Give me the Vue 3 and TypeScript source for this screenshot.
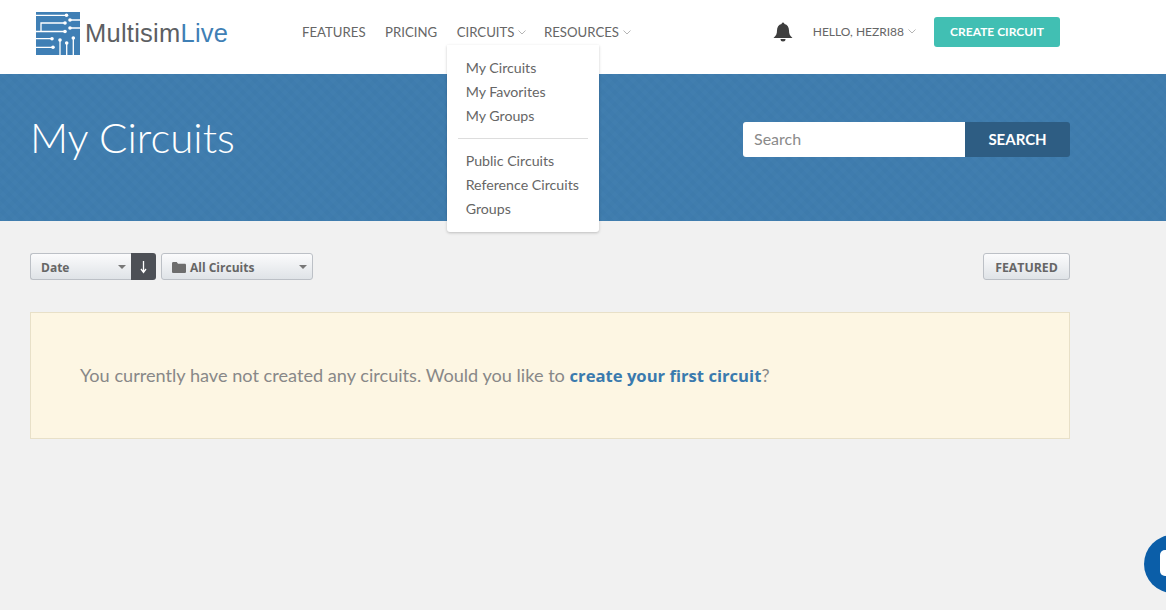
<script setup lang="ts">
const menuTop = ['My Circuits', 'My Favorites', 'My Groups']
const menuBottom = ['Public Circuits', 'Reference Circuits', 'Groups']
</script>

<template>
  <div class="page">
    <header class="topbar">
      <a class="logo">
        <svg class="logo__mark" width="44" height="43" viewBox="0 0 44 43">
          <rect width="44" height="43" fill="#3f7fb5" />
          <g fill="none" stroke="#fff" stroke-width="1.3">
            <path d="M0 3.300H30M34 8H44M34 16H44M29 11H5V19.500H0M5 19.500H29M0 26.700H16M0 35.300H17" />
            <path d="M24 28V43M30.700 31V43M37.300 26V43" />
          </g>
          <g fill="#fff">
            <circle cx="30.500" cy="3.300" r="1.800" />
            <circle cx="34" cy="8" r="1.800" />
            <circle cx="34" cy="16" r="1.800" />
            <circle cx="29" cy="11" r="1.800" />
            <circle cx="29" cy="19.500" r="1.800" />
            <circle cx="16" cy="26.700" r="1.800" />
            <circle cx="17" cy="35.300" r="1.800" />
            <circle cx="24" cy="28" r="1.800" />
            <circle cx="30.700" cy="31" r="1.800" />
            <circle cx="37.300" cy="26" r="1.800" />
          </g>
        </svg>
        <span class="logo__text">Multisim<span class="logo__live">Live</span></span>
      </a>

      <nav class="nav">
        <a class="nav__link">FEATURES</a>
        <a class="nav__link">PRICING</a>
        <a class="nav__link nav__link--caret">
          CIRCUITS
          <svg class="caret" width="8" height="5" viewBox="0 0 8 5"><path d="M.5.5 4 4 7.500.5" /></svg>
          <div class="menu">
            <a v-for="item in menuTop" :key="item" class="menu__item">{{ item }}</a>
            <hr class="menu__rule" />
            <a v-for="item in menuBottom" :key="item" class="menu__item">{{ item }}</a>
          </div>
        </a>
        <a class="nav__link nav__link--caret">
          RESOURCES
          <svg class="caret" width="8" height="5" viewBox="0 0 8 5"><path d="M.5.5 4 4 7.500.5" /></svg>
        </a>
      </nav>

      <div class="account">
        <svg class="bell" width="20" height="20" viewBox="0 0 20 20">
          <path d="M10 0.500a1.400 1.400 0 0 1 1.400 1.500C14.500 2.700 16 5.200 16 8.500c0 3.500.9 5.200 3.500 7.500H.5C3.100 13.700 4 12 4 8.500 4 5.200 5.500 2.700 8.600 2A1.400 1.400 0 0 1 10 .5Z" />
          <path d="M7.500 17h5a2.500 2.500 0 0 1-5 0Z" />
        </svg>
        <span class="account__name">
          HELLO, HEZRI88
          <svg class="caret" width="8" height="5" viewBox="0 0 8 5"><path d="M.5.5 4 4 7.500.5" /></svg>
        </span>
        <button class="create-btn">CREATE CIRCUIT</button>
      </div>
    </header>

    <section class="hero">
      <h1 class="hero__title">My Circuits</h1>
      <form class="search" @submit.prevent>
        <input class="search__input" placeholder="Search" />
        <button class="search__btn">SEARCH</button>
      </form>
    </section>

    <main class="content">
      <div class="toolbar">
        <div class="sort">
          <button class="select select--date">
            <span>Date</span>
            <i class="select__arrow" />
          </button>
          <button class="sort__dir">
            <svg width="8" height="14" viewBox="0 0 8 14">
              <path d="M3.500 1v11M1 9l2.500 3.500L6 9" fill="none" stroke="#fff" stroke-width="1.300" />
            </svg>
          </button>
        </div>
        <button class="select select--folder">
          <span class="select__label">
            <svg width="14" height="11" viewBox="0 0 14 11">
              <path d="M0 1.500C0 .7.500 0 1.300 0h3.400l1.300 1.800h6.700c.7 0 1.300.5 1.300 1.200v6.700c0 .7-.6 1.300-1.300 1.300H1.300C.6 11 0 10.400 0 9.700Z" fill="#6d6d6d" />
            </svg>
            All Circuits
          </span>
          <i class="select__arrow" />
        </button>
        <button class="featured">FEATURED</button>
      </div>

      <div class="notice">
        You currently have not created any circuits. Would you like to
        <a class="notice__link">create your first circuit</a>?
      </div>
    </main>

    <div class="chat">
      <span class="chat__glyph" />
    </div>
  </div>
</template>

<style>
html,
body {
  margin: 0;
  background: #f1f1f1;
}
</style>

<style scoped>
.page {
  position: relative;
  width: 1166px;
  height: 610px;
  overflow: hidden;
  background: #f1f1f1;
  font-family: Lato, sans-serif;
  color: #666;
}

.topbar {
  display: flex;
  align-items: center;
  height: 74px;
  padding: 0 106px 0 36px;
  background: #fff;
  box-sizing: border-box;
}

.logo {
  display: flex;
  align-items: center;
  gap: 5px;
  width: 266px;
  align-self: flex-start;
  margin-top: 12px;
}

.logo__mark {
  flex: none;
}

.logo__text {
  font-family: "Liberation Sans", sans-serif;
  font-size: 25.500px;
  letter-spacing: 0.25px;
  color: #5d5f63;
}

.logo__live {
  color: #3f7fb5;
}

.nav {
  display: flex;
  gap: 19.500px;
  margin-top: -10px;
}

.nav__link {
  position: relative;
  font-size: 13.200px;
  color: #666;
}

.nav__link--caret {
  display: flex;
  align-items: center;
  gap: 4px;
}

.nav__link--caret:nth-child(3) {
  margin-right: -2px;
}

.caret {
  fill: none;
  stroke: #b5b5b5;
  stroke-width: 1;
}

.menu {
  position: absolute;
  top: 21px;
  left: -10px;
  z-index: 5;
  width: 152px;
  height: 187px;
  padding: 11px 11px 0 19px;
  box-sizing: border-box;
  background: #fff;
  border-radius: 0 0 3px 3px;
  box-shadow: 0 1px 3px rgba(0, 0, 0, 0.22);
}

.menu__item {
  display: block;
  height: 24px;
  line-height: 24px;
  font-size: 14.200px;
  color: #666;
  white-space: nowrap;
}

.menu__rule {
  height: 1px;
  margin: 10px 0 10px -8px;
  border: 0;
  background: #ddd;
}

.account {
  display: flex;
  align-items: center;
  margin-left: auto;
  margin-top: -11px;
}

.bell {
  fill: #3e3e3e;
  margin-right: 20px;
}

.account__name {
  display: flex;
  align-items: center;
  gap: 4px;
  margin-right: 18px;
  font-size: 12px;
  color: #666;
}

.create-btn {
  width: 126px;
  height: 30px;
  padding: 0;
  border: 0;
  border-radius: 3px;
  background: #41bfb3;
  color: #fff;
  font-family: Lato, sans-serif;
  font-size: 12px;
  font-weight: 700;
}

.hero {
  display: flex;
  align-items: flex-start;
  justify-content: space-between;
  width: 1040px;
  height: 147px;
  padding: 0 96px 0 30px;
  background-color: #3f7cae;
  background-image:
    linear-gradient(45deg, rgba(255, 255, 255, 0.012) 25%, transparent 25% 50%, rgba(255, 255, 255, 0.012) 50% 75%, transparent 75%),
    linear-gradient(-45deg, rgba(0, 0, 0, 0.012) 25%, transparent 25% 50%, rgba(0, 0, 0, 0.012) 50% 75%, transparent 75%);
  background-size: 12px 12px;
}

.hero__title {
  margin: 35px 0 0;
  font-size: 42px;
  line-height: 56px;
  font-weight: 300;
  color: #fff;
}

.search {
  display: flex;
  margin-top: 48px;
}

.search__input {
  width: 222px;
  height: 35px;
  padding: 0 11px 2px;
  box-sizing: border-box;
  border: 0;
  border-radius: 3px 0 0 3px;
  background: #fff;
  font-family: Lato, sans-serif;
  font-size: 16px;
  outline: none;
}

.search__input::placeholder {
  color: #8a8a8a;
  opacity: 1;
}

.search__btn {
  width: 105px;
  height: 35px;
  padding: 0 0 1px;
  border: 0;
  border-radius: 0 3px 3px 0;
  background: #2e5d83;
  color: #fff;
  font-family: Lato, sans-serif;
  font-size: 15px;
  font-weight: 700;
}

.content {
  width: 1040px;
  margin-left: 30px;
  padding-top: 32px;
}

.toolbar {
  display: flex;
  align-items: center;
  gap: 5px;
  height: 27px;
}

.sort {
  display: flex;
}

.select {
  display: flex;
  align-items: center;
  justify-content: space-between;
  height: 27px;
  padding: 1px 5px 0 10px;
  box-sizing: border-box;
  border: 1px solid #bcc0c6;
  border-radius: 3px;
  background: linear-gradient(#fbfbfc, #dfe3e7);
  color: #666;
  font-family: "Open Sans", sans-serif;
  font-size: 12px;
  font-weight: 700;
}

.select--date {
  width: 101px;
  border-right: 0;
  border-radius: 3px 0 0 3px;
}

.select--folder {
  width: 152px;
}

.select__label {
  display: flex;
  align-items: center;
  gap: 4px;
}

.select__arrow {
  width: 0;
  height: 0;
  border-left: 4px solid transparent;
  border-right: 4px solid transparent;
  border-top: 4px solid #777;
}

.sort__dir {
  display: flex;
  align-items: center;
  justify-content: center;
  width: 25px;
  height: 27px;
  padding: 0;
  border: 0;
  border-radius: 0 3px 3px 0;
  background: #4d5056;
}

.featured {
  width: 87px;
  height: 27px;
  margin-left: auto;
  padding: 1px 0 0;
  border: 1px solid #bcc0c6;
  border-radius: 3px;
  background: linear-gradient(#fbfbfc, #dfe3e7);
  color: #666;
  font-family: "Open Sans", sans-serif;
  font-size: 12.300px;
  font-weight: 700;
}

.notice {
  height: 127px;
  margin-top: 32px;
  padding-left: 49px;
  box-sizing: border-box;
  border: 1px solid #e8e0c8;
  background: #fdf6e3;
  color: #888;
  font-size: 18.150px;
  line-height: 125px;
}

.notice__link {
  font-family: "Open Sans", sans-serif;
  font-size: 16.650px;
  font-weight: 700;
  color: #3a7aae;
}

.chat {
  position: absolute;
  left: 1144px;
  top: 535px;
  width: 58px;
  height: 58px;
  border-radius: 50%;
  background: #0b5ea8;
}

.chat__glyph {
  position: absolute;
  left: 16px;
  top: 15px;
  width: 26px;
  height: 26px;
  border-radius: 5px;
  background: #fff;
}
</style>
